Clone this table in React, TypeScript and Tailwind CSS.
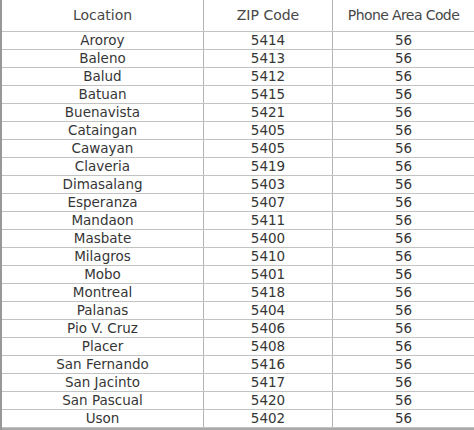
const rows: [string, string, string][] = [
  ["Aroroy", "5414", "56"],
  ["Baleno", "5413", "56"],
  ["Balud", "5412", "56"],
  ["Batuan", "5415", "56"],
  ["Buenavista", "5421", "56"],
  ["Cataingan", "5405", "56"],
  ["Cawayan", "5405", "56"],
  ["Claveria", "5419", "56"],
  ["Dimasalang", "5403", "56"],
  ["Esperanza", "5407", "56"],
  ["Mandaon", "5411", "56"],
  ["Masbate", "5400", "56"],
  ["Milagros", "5410", "56"],
  ["Mobo", "5401", "56"],
  ["Montreal", "5418", "56"],
  ["Palanas", "5404", "56"],
  ["Pio V. Cruz", "5406", "56"],
  ["Placer", "5408", "56"],
  ["San Fernando", "5416", "56"],
  ["San Jacinto", "5417", "56"],
  ["San Pascual", "5420", "56"],
  ["Uson", "5402", "56"],
]

export default function App() {
  return (
    <div
      className="w-[474px] h-[430px] bg-white overflow-hidden border-l-2 border-[#979797]"
      style={{ fontFamily: '"DejaVu Sans", Verdana, sans-serif' }}
    >
      {/* header */}
      <div className="flex h-[32px] border-b border-[#c2c2c2] text-[14px] leading-[31px] text-[#474747]">
        <div className="w-[202px] border-r border-[#b4b4b4] text-center">Location</div>
        <div className="w-[129px] border-r border-[#b4b4b4] text-center">ZIP Code</div>
        <div className="flex-1 text-center tracking-[-0.6px]">Phone Area Code</div>
      </div>

      {rows.map(([loc, zip, area]) => (
        <div
          key={loc}
          className="flex h-[18px] border-b border-[#c2c2c2] text-[13.5px] leading-[17px] text-[#363636]"
        >
          <div className="w-[202px] border-r border-[#b4b4b4] text-center">{loc}</div>
          <div className="w-[129px] border-r border-[#b4b4b4] text-center">{zip}</div>
          <div className="flex-1 text-center">{area}</div>
        </div>
      ))}

      <div className="h-[2px] bg-[#a8a8a8]" />
    </div>
  )
}
